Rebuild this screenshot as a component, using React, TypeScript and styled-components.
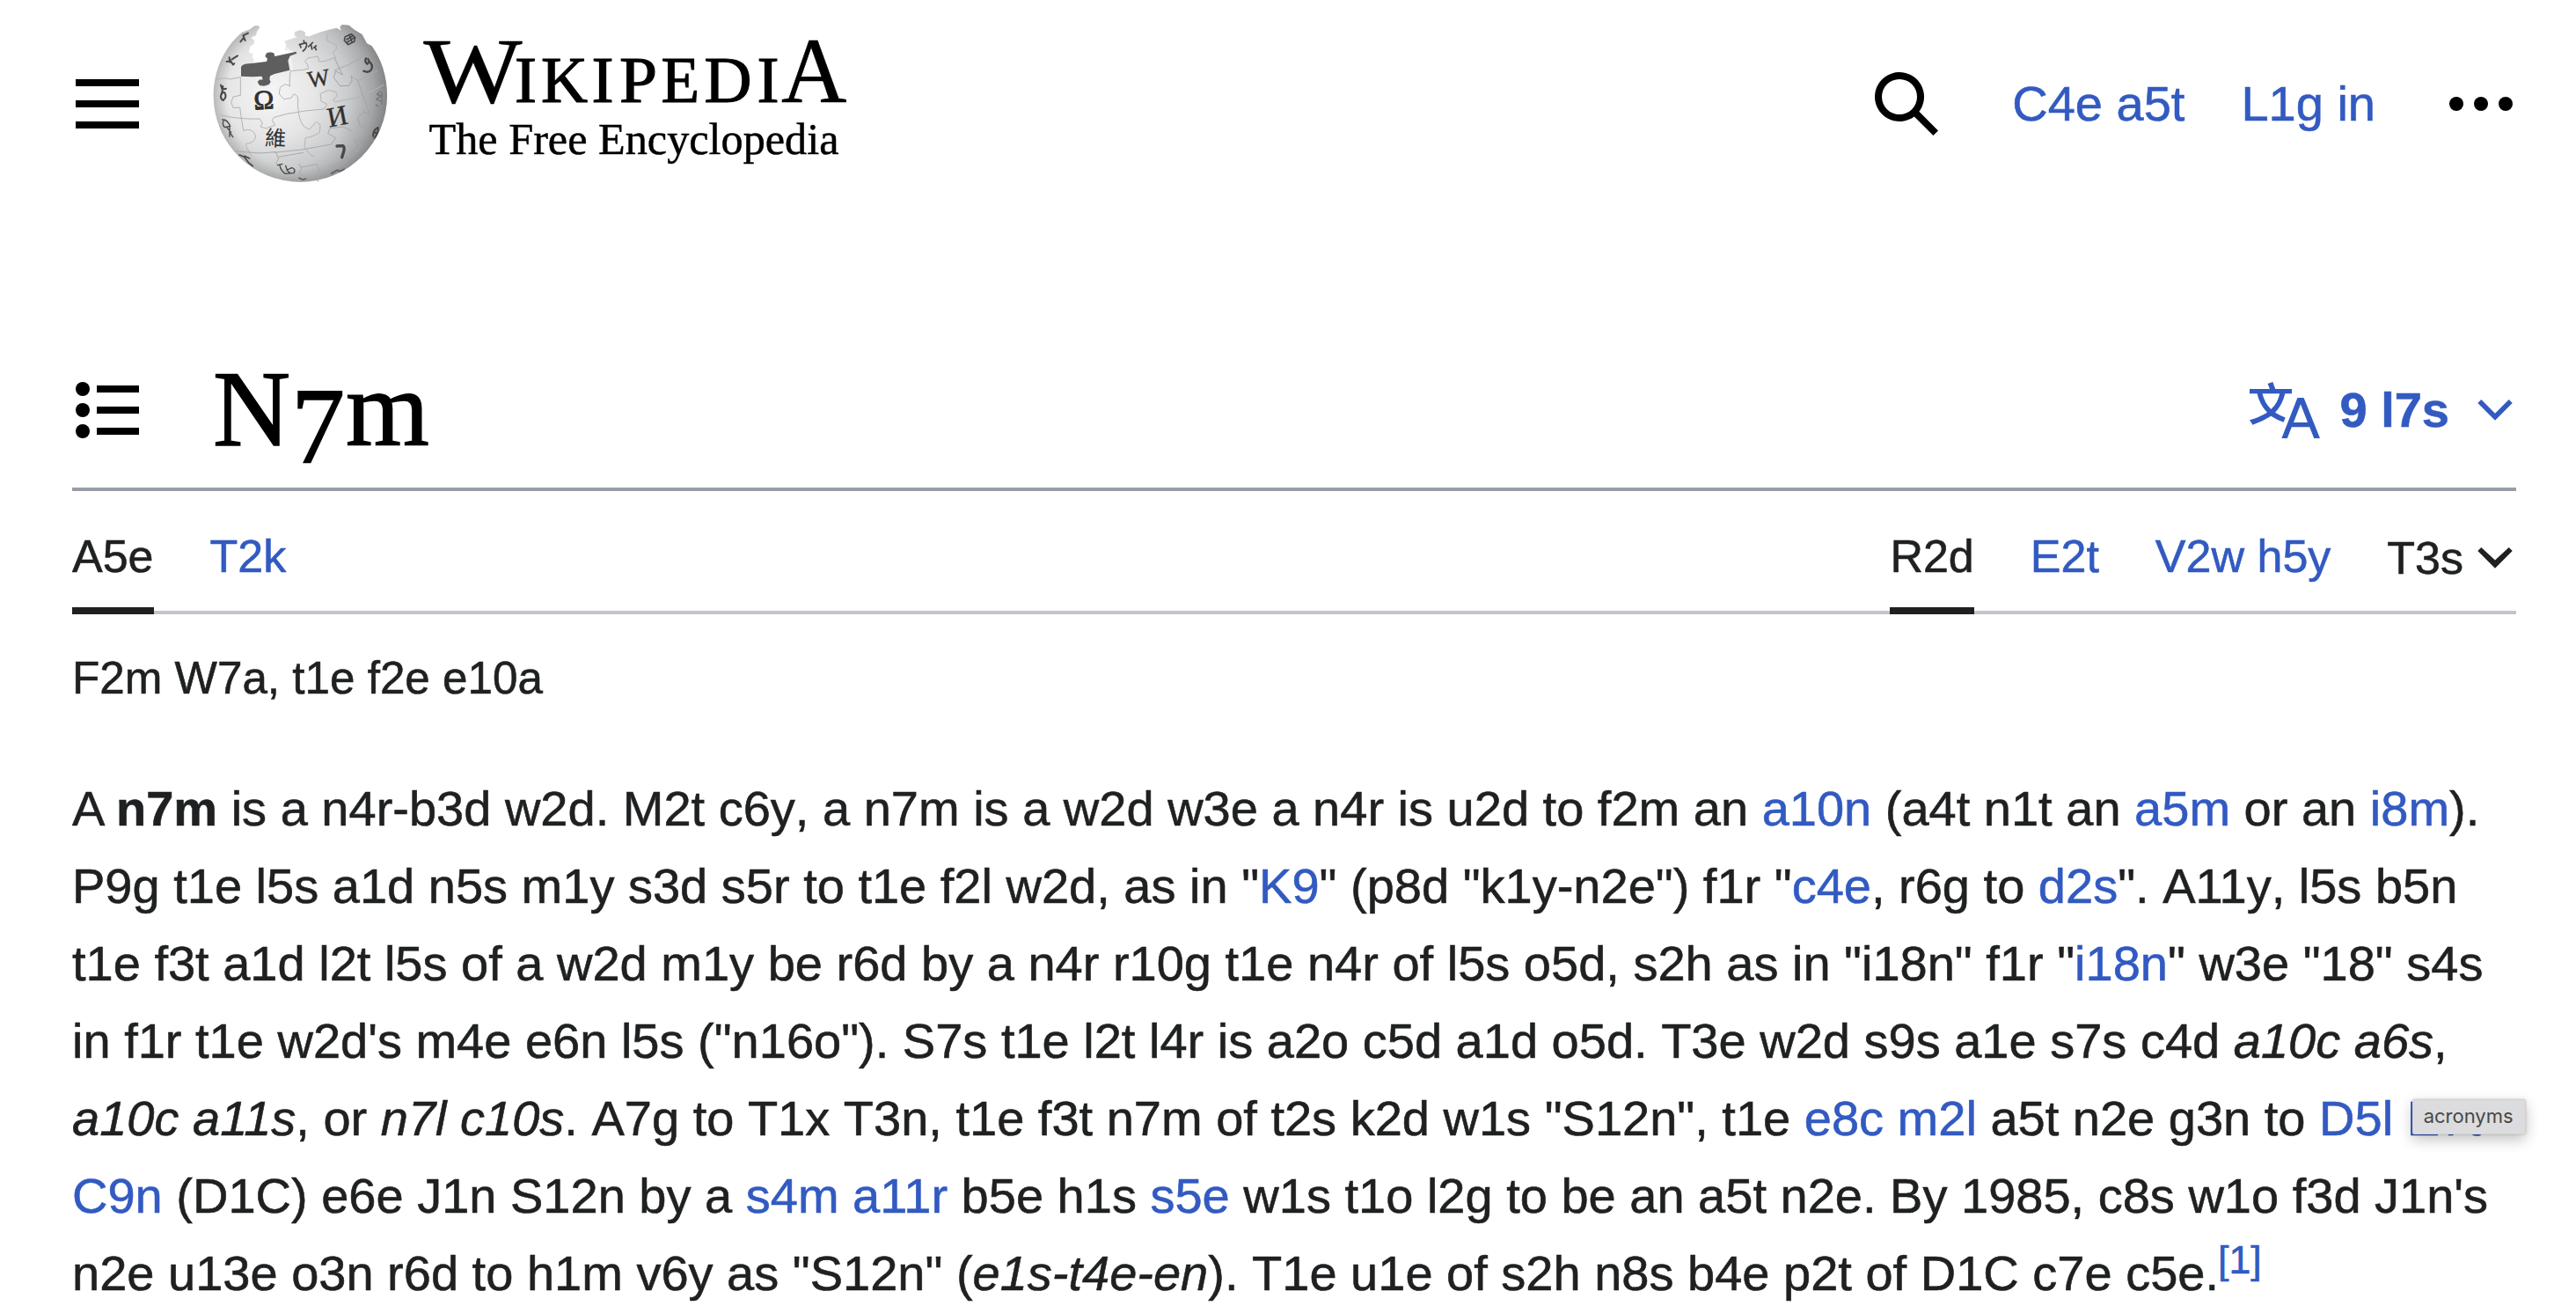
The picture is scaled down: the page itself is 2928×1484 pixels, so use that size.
import React from "react";
import styled, { createGlobalStyle } from "styled-components";

const color = {
  text: "#1e2021",
  link: "#325ac1",
  ruleStrong: "#989ea7",
  ruleSoft: "#c1c4ca",
};

const sans = `"Liberation Sans", Arial, sans-serif`;
const serif = `"Liberation Serif", "Times New Roman", serif`;

const GlobalStyle = createGlobalStyle`
  body {
    margin: 0;
    background: #fff;
    color: ${color.text};
    font-family: ${sans};
    font-kerning: none;
    overflow: hidden;
  }
`;

const Page = styled.div`
  box-sizing: border-box;
  width: 2928px;
  height: 1484px;
  overflow: hidden;
  padding: 0 68px 0 82px;
  -webkit-text-stroke: 0.6px currentColor;
`;

const Header = styled.header`
  display: flex;
  align-items: center;
  height: 236px;
`;

const IconButton = styled.button`
  display: flex;
  flex: none;
  padding: 0;
  border: 0;
  background: none;
  color: #000;
`;

const Icon = styled.svg`
  display: block;
  width: 80px;
  height: 80px;
  fill: currentColor;
`;

const Brand = styled.a`
  display: flex;
  align-items: center;
  margin-left: 68px;
  -webkit-text-stroke: 0;
`;

const Globe = styled.svg`
  display: block;
  width: 220px;
  height: 216px;
`;

const Wordmark = styled.svg`
  display: block;
  width: 520px;
  height: 236px;
  margin-left: 10px;
  font-family: ${serif};
`;

const UserTools = styled.nav`
  display: flex;
  align-items: center;
  gap: 80px;
  margin-left: auto;
`;

const UserLinks = styled.div`
  display: flex;
  gap: 64px;
  font-size: 56px;
  line-height: 88px;
`;

const Link = styled.a`
  color: ${color.link};
  white-space: nowrap;
  -webkit-text-stroke-color: ${color.link};
`;

const TitleBar = styled.div`
  display: flex;
  align-items: center;
  height: 176px;
  padding-top: 142px;
  border-bottom: 4px solid ${color.ruleStrong};
`;

const Title = styled.h1`
  margin: 0 0 2px 80px;
  color: #000;
  font: 400 122px/152px ${serif};
  letter-spacing: 1px;
  -webkit-text-stroke: 1.4px #000;
`;

const OldStyle = styled.span`
  position: relative;
  top: 19px;
`;

const Languages = styled.button`
  display: flex;
  align-items: center;
  margin-left: auto;
  padding: 0 4px 0 0;
  border: 0;
  background: none;
  color: ${color.link};
  font: 700 56px/88px ${sans};
  -webkit-text-stroke: 0.6px ${color.link};
`;

const LanguageCount = styled.span`
  margin: 0 32px 0 22px;
`;

const ChevronIcon = styled.svg`
  display: block;
  width: 40px;
  height: 24px;
  fill: currentColor;
`;

const TabBar = styled.nav`
  display: flex;
  justify-content: space-between;
  height: 136px;
  border-bottom: 4px solid ${color.ruleSoft};
`;

const TabGroup = styled.div`
  display: flex;
  gap: 64px;
`;

const Tab = styled.a<{ $active?: boolean }>`
  box-sizing: border-box;
  height: 140px;
  padding-top: 34px;
  border-bottom: 8px solid ${(p) => (p.$active ? color.text : "transparent")};
  color: ${(p) => (p.$active ? color.text : color.link)};
  -webkit-text-stroke-color: ${(p) => (p.$active ? color.text : color.link)};
  font-size: 52px;
  line-height: 80px;
  white-space: nowrap;
`;

const ToolsMenu = styled.div`
  display: flex;
  align-items: center;
  gap: 16px;
  height: 80px;
  padding: 36px 4px 0 0;
  font-size: 52px;
  line-height: 80px;
`;

const SiteSub = styled.div`
  margin-top: 33px;
  font-size: 51.2px;
  line-height: 80px;
`;

const Paragraph = styled.p`
  margin: 64px 0 0;
  font-size: 56px;
  line-height: 88px;
`;

const Line = styled.span`
  display: block;
  white-space: nowrap;
`;

const Narrow = styled.span`
  letter-spacing: -3px;
`;

const Kerned = styled.span`
  font-kerning: normal;
`;

const Reference = styled.sup`
  margin-left: -1px;
  font-size: 44.8px;
  line-height: 0;
  vertical-align: 19px;
`;

const TooltipAnchor = styled.span`
  position: relative;
`;

const Tooltip = styled.span`
  position: absolute;
  top: 10px;
  left: 6px;
  box-sizing: border-box;
  width: 129px;
  height: 40px;
  padding-left: 12px;
  border: 1px solid #d2d2d3;
  border-radius: 2px;
  background: #dcdcde;
  box-shadow: 0 6px 16px rgba(0, 0, 0, 0.24), 0 0 3px rgba(0, 0, 0, 0.16);
  color: #484848;
  font: 400 22px/37px Inter, sans-serif;
  -webkit-text-stroke: 0;
`;

const Chevron = ({ inner = 15.7 }: { inner?: number }) => (
  <ChevronIcon viewBox="0 0 40 24">
    <path d={`M.3 4 4.3 0 20 ${inner} 35.7 0l4 4L20 23.8z`} />
  </ChevronIcon>
);

const globeText = { fill: "#303030", fontFamily: serif };

const WikipediaGlobe = () => (
  <Globe viewBox="0 0 660 648">
    <defs>
      <radialGradient id="ball" gradientUnits="userSpaceOnUse" cx="235" cy="290" r="430">
        <stop offset="0" stopColor="#f6f6f6" />
        <stop offset=".35" stopColor="#e6e6e7" />
        <stop offset=".62" stopColor="#c9cacb" />
        <stop offset=".82" stopColor="#a2a3a5" />
        <stop offset="1" stopColor="#77787a" />
      </radialGradient>
      <radialGradient id="rim" gradientUnits="userSpaceOnUse" cx="334" cy="294" r="298">
        <stop offset=".84" stopColor="#888" stopOpacity="0" />
        <stop offset="1" stopColor="#777" stopOpacity=".36" />
      </radialGradient>
      <path
        id="shell"
        d="M196 63 190 57 176 59 163 70 135 80C75 130 38 210 38 296A296 294 0 0 0 630 296C630 230 610 170 577 126L561 118 545 88 516 70 500 56 477 54 469 61 473 74 458 65Q410 74 364 94L351 92 350 79 335 72 315 79 314 91 322 97 280 110 286 122 281 140 296 144 306 152 322 146 321 153 299 164 245 176 150 191 170 187 177 174 170 162 174 153 158 149 163 128 176 121 178 108 166 99 183 91 187 76Z"
      />
    </defs>
    <use href="#shell" fill="url(#ball)" />
    <use href="#shell" fill="url(#rim)" />
    <path
      fill="#5e5e5e"
      d="M132 198Q138 187 160 187L219 180 222 170 214 162 219 151 232 148 244 151 247 162 320 146 322 152 299 161 292 176 298 209 246 222 231 229 229 240 233 250 226 259 210 263 195 261 188 250 194 242 206 241 203 230 170 232 132 230Z"
    />
    <g fill="none" stroke="#b3b4b5" strokeWidth="3" strokeLinejoin="round">
      <path d="M45 240 80 236 95 240 130 233M130 233V295L105 300 98 320 106 338 128 336 132 368 140 415Q172 405 181 432 184 455 150 460 145 470 168 500 195 560" />
      <path d="M60 362Q130 378 196 375L205 390 198 402 218 408 248 396 238 380 245 370 290 358 350 348 415 342 425 325 405 315 402 290 430 277 455 283 460 298 445 310 455 317 530 302 570 285 620 258" />
      <path d="M300 214Q295 262 300 264L283 257 265 268 262 290 278 308 303 304 313 290 326 300Q322 370 345 400L365 412 388 385 402 395 400 422 375 435 352 440 348 470 365 495 383 505" />
      <path d="M300 212 345 208 362 204 358 190 350 178 360 168 395 162 398 180 420 178 455 165 445 150 458 135 455 122 425 108 425 85" />
      <path stroke="#a2a3a5" d="M450 166 478 225 455 212 448 235 470 263 500 262 510 245 508 228 530 245 570 360 550 350 530 372 538 400 560 410 548 440 520 450 535 480 510 500" />
      <path stroke="#a8a9ab" d="M450 210 500 190 545 165 535 140M530 245 600 210M110 485 170 490 200 492 250 488 260 510 250 530M245 490 340 480 440 462 455 440 428 425 435 408 480 402 510 418M330 528 338 545 330 560 345 572 345 585M335 540 390 530 398 548 394 590M260 505 345 490M425 560 430 545 455 545 490 520 540 470" />
    </g>
    <path stroke="#fff" strokeWidth="4" opacity=".7" fill="none" d="M284 133 308 148M300 168 306 208" />
    <g textAnchor="middle" style={globeText}>
      <text x="211" y="342" fontSize="92" stroke="#303030" strokeWidth="3" transform="rotate(-3 211 342)">Ω</text>
      <text x="400" y="263" fontSize="80" stroke="#303030" strokeWidth="1" transform="rotate(-9 400 263)">W</text>
      <text x="466" y="398" fontSize="96" stroke="#303030" strokeWidth="1" transform="rotate(-11 466 398)">И</text>
      <text x="248" y="467" fontSize="72" style={{ fontFamily: '"Noto Sans CJK TC", sans-serif' }} transform="rotate(3 248 467)">維</text>
    </g>
    <g fill="none" stroke="#484848" strokeWidth="6" strokeLinecap="round" strokeLinejoin="round">
      <path strokeWidth="10" d="M459 468 480 467Q486 472 482 487L476 506" />
      <path d="M333 122 336 132M331 122 354 116 356 124Q353 138 343 144M346 108 347 117M376 115 362 129M371 124 374 138M388 126 380 133M385 132 388 140" strokeWidth="5" />
      <path d="M558 169Q552 180 562 188L569 180 565 171M569 180Q584 192 576 207 568 220 550 212" strokeWidth="7" />
      <path d="M487 95 508 86 521 98 518 112 497 122 484 108ZM492 105 510 94M494 114 519 98M501 88 511 115" strokeWidth="5" />
      <path d="M130 112 142 98 139 91 156 83M142 98 146 108" strokeWidth="6" />
      <path d="M83 180 96 178 105 190M92 166 94 182M100 173 120 160M104 190 109 187" strokeWidth="6" />
      <path d="M63 260 68 275 81 272M67 284Q57 305 71 312 85 302 76 286ZM70 264 67 290" strokeWidth="6" />
      <path d="M68 378Q84 376 95 400L76 404Q65 391 74 379M84 405 98 421M93 399 93 436M96 425 104 437" strokeWidth="4" />
      <path d="M126 498 143 505 158 525 172 536M143 502 161 510" strokeWidth="5" />
      <path d="M256 533 273 529M264 532Q266 551 283 562L312 560Q320 545 305 542L289 549 284 535M288 550 299 560" strokeWidth="4" />
      <path d="M606 282 595 292 610 297 593 308 608 315M612 285V325M592 326 599 332" strokeWidth="4" stroke="#777" />
      <path d="M582 434Q583 411 599 405 602 420 587 440M586 420 594 424" strokeWidth="6" />
      <path d="M440 562 460 550 468 554 484 547M330 577 343 583 353 579" strokeWidth="5" stroke="#606060" />
    </g>
  </Globe>
);

const letters: { ch: string; x: number; width: number; big?: boolean }[] = [
  { ch: "W", x: 481.5, width: 112, big: true },
  { ch: "I", x: 585, width: 25 },
  { ch: "K", x: 615, width: 53 },
  { ch: "I", x: 672.5, width: 25 },
  { ch: "P", x: 704, width: 43 },
  { ch: "E", x: 751.5, width: 43.5 },
  { ch: "D", x: 800.5, width: 54 },
  { ch: "I", x: 860.5, width: 25 },
  { ch: "A", x: 888, width: 74.5, big: true },
];

const WikipediaWordmark = () => (
  <Wordmark viewBox="460 0 520 236">
    {letters.map((l, i) => (
      <text
        key={i}
        x={l.x}
        y="115.7"
        fontSize={l.big ? 105 : 73.5}
        textLength={l.width}
        lengthAdjust="spacingAndGlyphs"
        stroke="#000"
        strokeWidth={l.big ? 0.6 : 1.2}
      >
        {l.ch}
      </text>
    ))}
    <text x="487.5" y="174.8" fontSize="51" textLength="466" lengthAdjust="spacingAndGlyphs" stroke="#000" strokeWidth=".5">
      The Free Encyclopedia
    </text>
  </Wordmark>
);

export default function App() {
  return (
    <Page>
      <GlobalStyle />
      <Header>
        <IconButton aria-label="Main menu">
          <Icon viewBox="0 0 20 20">
            <path d="M1 3h18v2H1zm0 6h18v2H1zm0 6h18v2H1z" />
          </Icon>
        </IconButton>
        <Brand>
          <WikipediaGlobe />
          <WikipediaWordmark />
        </Brand>
        <UserTools>
          <IconButton aria-label="Search">
            <Icon viewBox="0 0 20 20">
              <path d="M12.2 13.6a7 7 0 1 1 1.4-1.4l5.4 5.4-1.4 1.4zM3 8a5 5 0 1 0 10 0A5 5 0 0 0 3 8" />
            </Icon>
          </IconButton>
          <UserLinks>
            <Link>C4e a5t</Link>
            <Link>L1g in</Link>
          </UserLinks>
          <IconButton aria-label="More">
            <Icon viewBox="0 0 20 20">
              <circle cx="3" cy="10" r="2" />
              <circle cx="10" cy="10" r="2" />
              <circle cx="17" cy="10" r="2" />
            </Icon>
          </IconButton>
        </UserTools>
      </Header>

      <TitleBar>
        <IconButton aria-label="Contents">
          <Icon viewBox="0 0 20 20">
            <path d="M7 3h12v2H7zm0 6h12v2H7zm0 6h12v2H7z" />
            <circle cx="3" cy="4" r="2" />
            <circle cx="3" cy="10" r="2" />
            <circle cx="3" cy="16" r="2" />
          </Icon>
        </IconButton>
        <Title>
          N<OldStyle>7</OldStyle>m
        </Title>
        <Languages>
          <Icon viewBox="0 0 20 20">
            <path d="M9.1 18 13.6 6.5h1.8L20 18h-1.7l-1.25-3.2h-5.1L10.7 18zm3.4-4.5h4L14.5 8.3zM10.17 12.11a13.4 13.4 0 0 1-2.91-1.41 11.46 11.46 0 0 0 2.81-5.37H12V4H7.31a4 4 0 0 0-.2-.56C6.87 2.79 6.6 2 6.6 2l-1.47.5s.4.89.6 1.5H0v1.33h2.15A11.23 11.23 0 0 0 5 10.7a17.2 17.2 0 0 1-5 2.1q.56.82.87 1.38a23.3 23.3 0 0 0 5.22-2.51 15.6 15.6 0 0 0 3.56 1.77zM3.63 5.33h4.91a8.1 8.1 0 0 1-2.45 4.45 9.1 9.1 0 0 1-2.46-4.45" />
          </Icon>
          <LanguageCount>9 l7s</LanguageCount>
          <Chevron />
        </Languages>
      </TitleBar>

      <TabBar>
        <TabGroup>
          <Tab $active>A5e</Tab>
          <Tab>T2k</Tab>
        </TabGroup>
        <TabGroup>
          <Tab $active>R2d</Tab>
          <Tab>E2t</Tab>
          <Tab>V2w h5y</Tab>
          <ToolsMenu>
            T3s
            <Chevron inner={14.6} />
          </ToolsMenu>
        </TabGroup>
      </TabBar>

      <SiteSub>F2m W7a, t1e f2e e10a</SiteSub>

      <Paragraph>
        <Line>
          A<Narrow> </Narrow><b>n7m</b> is a n4r-b3d w2d. M2t c6y, a n7m is a w2d w3e a n4r is u2d to f2m an <Link>a10n</Link> (a4t n1t an{" "}
          <Link>a5m</Link> or an <Link>i8m</Link>).
        </Line>
        <Line>
          P9g t1e l5s a1d n5s m1y s3d s5r to t1e f2l w2d, as in "<Link>K9</Link>" (p8d "k1y-n2e") f1r "<Link>c4e</Link>, r6g to{" "}
          <Link>d2s</Link>". A<Kerned>11</Kerned>y, l5s b5n
        </Line>
        <Line>
          t1e f3t a1d l2t l5s of a w2d m1y be r6d by a n4r r10g t1e n4r of l5s o5d, s2h as in "i18n" f1r "<Link>i18n</Link>" w3e "18" s4s
        </Line>
        <Line>
          in f1r t1e w2d's m4e e6n l5s ("n16o"). S7s t1e l2t l4r is a2o c5d a1d o5d. T3e w2d s9s a1e s7s c4d <i>a10c a6s</i>,
        </Line>
        <Line>
          <i>a10c a<Kerned>11</Kerned>s</i>, or <i>n7l c10s</i>. A7g to T1x T3n, t1e f3t n7m of t2s k2d w1s "S12n", t1e{" "}
          <Link>e8c m2l</Link> a5t n2e g3n to{" "}
          <Link>
            D5l{" "}
            <TooltipAnchor>
              E7t<Tooltip role="tooltip">acronyms</Tooltip>
            </TooltipAnchor>
          </Link>
        </Line>
        <Line>
          <Link>C9n</Link> (D1C) e6e J1n S12n by a <Link>s4m a<Kerned>11</Kerned>r</Link> b5e h1s <Link>s5e</Link> w1s t1o l2g to be an
          a5t n2e. By 1985, c8s w1o f3d J1n's
        </Line>
        <Line>
          n2e u13e o3n r6d to h1m v6y as "S12n" (<i>e1s-t4e-en</i>). T1e u1e of s2h n8s b4e p2t of D1C c7e c5e.
          <Reference>
            <Link>[1]</Link>
          </Reference>
        </Line>
      </Paragraph>
    </Page>
  );
}
